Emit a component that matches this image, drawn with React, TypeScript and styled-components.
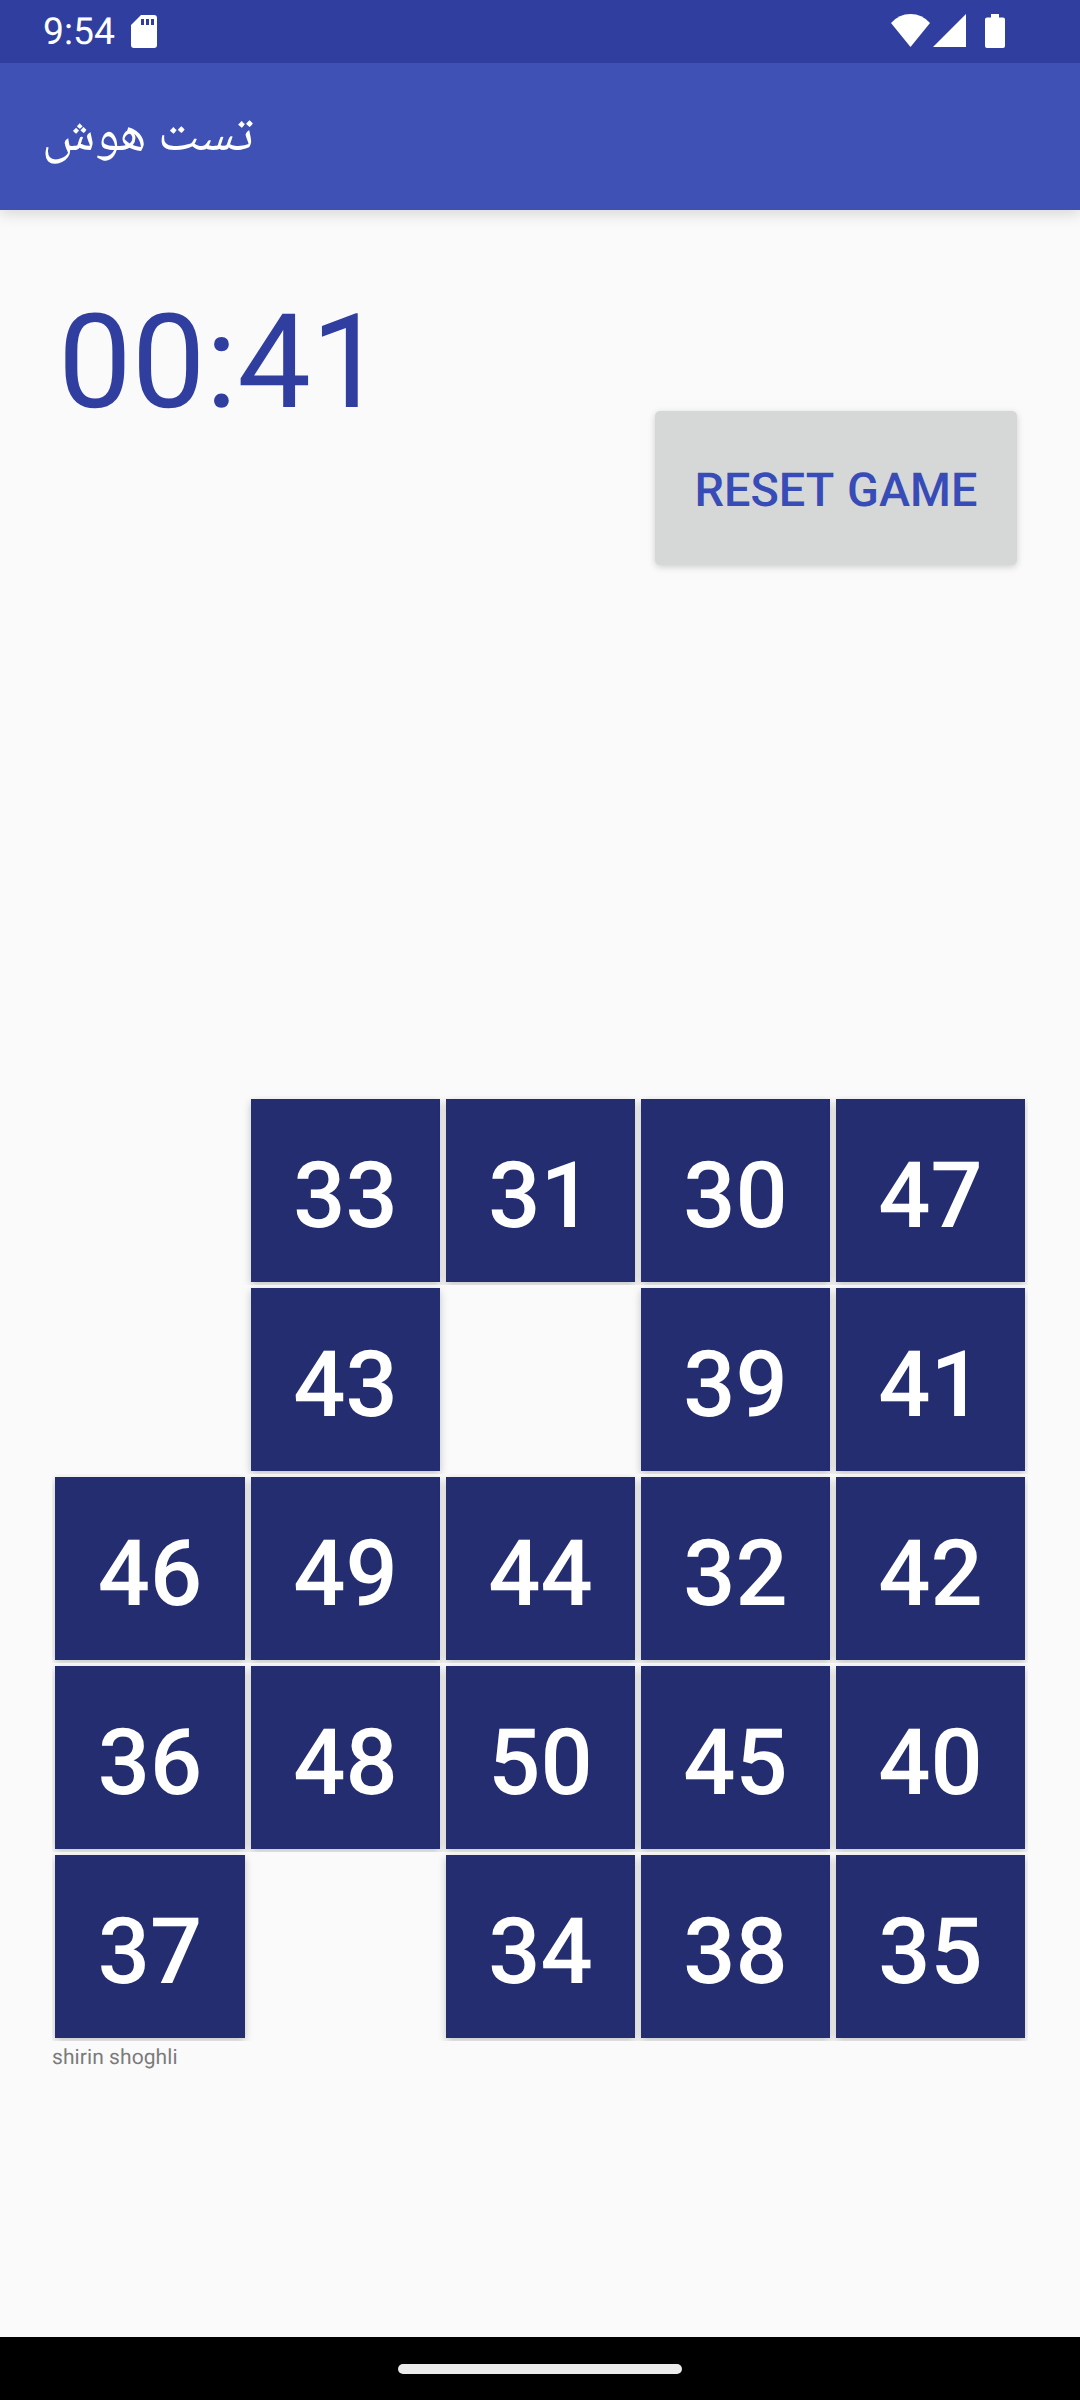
import React from "react";
import styled, { createGlobalStyle } from "styled-components";

const GlobalStyle = createGlobalStyle`
  *, *::before, *::after { box-sizing: border-box; }
  body { margin: 0; background: #fafafa; font-family: Roboto, sans-serif; text-rendering: geometricPrecision; }
`;

const Screen = styled.div`
  width: 1080px;
  height: 2400px;
  display: flex;
  flex-direction: column;
  background: #fafafa;
  overflow: hidden;
`;

const StatusBar = styled.header`
  height: 63px;
  flex: none;
  display: flex;
  justify-content: space-between;
  z-index: 1;
  background: #303f9f;
  padding: 0 75px 0 43px;
  color: #fff;
`;

const StatusGroup = styled.div`
  display: flex;
  align-items: flex-start;
`;

const Clock = styled.span`
  width: 88px;
  font-size: 37.3px;
  line-height: 44px;
  padding-top: 10px;
`;

const StatusIcon = styled.svg<{ $gap?: number }>`
  display: block;
  flex: none;
  fill: #fff;
  margin-top: 14px;
  margin-left: ${(p) => p.$gap ?? 0}px;
`;

const AppBar = styled.div`
  height: 147px;
  flex: none;
  display: flex;
  align-items: center;
  padding: 6px 42px 0;
  background: #3f51b5;
  box-shadow: 0 4px 14px rgba(0, 0, 0, 0.14);
`;

const Title = styled.h1`
  margin: 0;
  color: #fff;
  font-family: "Noto Naskh Arabic", "Noto Sans Arabic", "DejaVu Sans", sans-serif;
  font-size: 52.5px;
  font-weight: 400;
  line-height: 60px;
  white-space: nowrap;
`;

const Content = styled.main`
  flex: 1;
  display: flex;
  flex-direction: column;
  padding: 0 52px;
`;

const TopRow = styled.section`
  height: 886px;
  flex: none;
  display: flex;
  justify-content: space-between;
  align-items: flex-start;
  padding: 0 11px 0 6px;
`;

const Timer = styled.div`
  margin-top: 76px;
  font-size: 131.25px;
  line-height: 154px;
  color: #303f9f;
`;

const ResetButton = styled.button`
  margin: 201px 0 0;
  width: 362px;
  height: 154px;
  padding: 6px 0 0;
  border: 0;
  border-radius: 5px;
  background: #d6d8d7;
  color: #384cb7;
  font: 500 46.8px/56px Roboto, sans-serif;
  word-spacing: 2.3px;
  text-rendering: geometricPrecision;
  box-shadow: 0 2px 7px rgba(0, 0, 0, 0.18);
`;

const Board = styled.section`
  display: flex;
  flex-direction: column;
`;

const BoardRow = styled.div`
  height: 189px;
  padding: 3px;
  display: grid;
  grid-template-columns: 190px repeat(4, 189px);
  column-gap: 6px;
  overflow: hidden;
`;

const Tile = styled.button`
  border: 0;
  padding: 12px 0 0;
  background: #232d70;
  color: #fff;
  font: 500 91.875px/108px Roboto, sans-serif;
  text-rendering: geometricPrecision;
  box-shadow: 0 3px 8px rgba(0, 0, 0, 0.22);
`;

const EmptyCell = styled.div``;

const Credit = styled.footer`
  margin-top: 5px;
  font-size: 21px;
  line-height: 25px;
  letter-spacing: 0.08px;
  color: #7b7b7b;
`;

const NavBar = styled.nav`
  height: 63px;
  flex: none;
  display: flex;
  justify-content: center;
  align-items: center;
  background: #000;
`;

const HomeHandle = styled.div`
  width: 284px;
  height: 10px;
  border-radius: 5px;
  background: #ebebeb;
`;

const rows: (number | null)[][] = [
  [null, 33, 31, 30, 47],
  [null, 43, null, 39, 41],
  [46, 49, 44, 32, 42],
  [36, 48, 50, 45, 40],
  [37, null, 34, 38, 35],
];

export default function App() {
  return (
    <>
      <GlobalStyle />
      <Screen>
        <StatusBar>
          <StatusGroup>
            <Clock>9:54</Clock>
            <StatusIcon width="26" height="34" viewBox="0 0 26 34">
              <path
                fillRule="evenodd"
                d="M10 1H23A3 3 0 0 1 26 4V31A3 3 0 0 1 23 34H3A3 3 0 0 1 0 31V11ZM10 5V11H13V5ZM15 5V11H18V5ZM20 5V11H23V5Z"
              />
            </StatusIcon>
          </StatusGroup>
          <StatusGroup>
            <StatusIcon width="39" height="33" viewBox="0 0 39 33">
              <path d="M0 9Q8 0 19.5 0T39 9L19.5 33Z" />
            </StatusIcon>
            <StatusIcon $gap={3} width="33" height="33" viewBox="0 0 33 33">
              <path d="M33 0V33H0Z" />
            </StatusIcon>
            <StatusIcon $gap={19} width="20" height="34" viewBox="0 0 20 34">
              <path d="M6 0H14V3.500H18A2 2 0 0 1 20 5.500V32A2 2 0 0 1 18 34H2A2 2 0 0 1 0 32V5.500A2 2 0 0 1 2 3.500H6Z" />
            </StatusIcon>
          </StatusGroup>
        </StatusBar>
        <AppBar>
          <Title dir="rtl" lang="fa">تست هوش</Title>
        </AppBar>
        <Content>
          <TopRow>
            <Timer>00:41</Timer>
            <ResetButton>RESET GAME</ResetButton>
          </TopRow>
          <Board>
            {rows.map((row, r) => (
              <BoardRow key={r}>
                {row.map((n, c) =>
                  n === null ? <EmptyCell key={c} /> : <Tile key={c}>{n}</Tile>
                )}
              </BoardRow>
            ))}
          </Board>
          <Credit>shirin shoghli</Credit>
        </Content>
        <NavBar>
          <HomeHandle />
        </NavBar>
      </Screen>
    </>
  );
}
